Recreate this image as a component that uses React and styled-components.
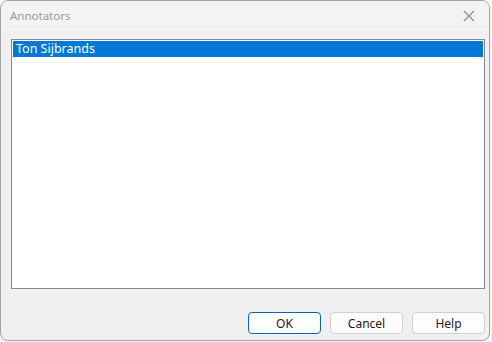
import React, { useState } from "react";
import styled, { createGlobalStyle } from "styled-components";

const Global = createGlobalStyle`
  html, body {
    margin: 0;
    padding: 0;
    background: #f6f6f6;
  }
  body {
    font-family: "Noto Sans", "Open Sans", Arial, sans-serif;
  }
`;

function CloseIcon() {
  return (
    <svg width="12" height="12" viewBox="0 0 12 12">
      <path d="M1 1 L11 11 M11 1 L1 11" stroke="#8a8a8a" strokeWidth="1.1" fill="none" />
    </svg>
  );
}

function App() {
  const annotators = ["Ton Sijbrands"];
  const [selected, setSelected] = useState(0);

  return (
    <>
      <Global />
      <Window>
        <TitleBar>
          <span>Annotators</span>
          <CloseButton aria-label="Close">
            <CloseIcon />
          </CloseButton>
        </TitleBar>
        <Body>
          <ListBox>
            {annotators.map((name, index) => (
              <ListItem
                key={index}
                $selected={index === selected}
                onClick={() => setSelected(index)}
              >
                {name}
              </ListItem>
            ))}
          </ListBox>
        </Body>
        <Footer>
          <Button $default>OK</Button>
          <Button>Cancel</Button>
          <Button>Help</Button>
        </Footer>
      </Window>
    </>
  );
}

const Window = styled.div`
  width: 490px;
  height: 341px;
  box-sizing: border-box;
  border: 1px solid #a4a4a4;
  border-radius: 8px;
  background: #f0f0f0;
  display: flex;
  flex-direction: column;
  overflow: hidden;
`;

const TitleBar = styled.div`
  height: 30px;
  display: flex;
  align-items: center;
  justify-content: space-between;
  padding: 0 0 0 9px;
  background: #f3f3f3;
  color: #999999;
  font-size: 11.5px;
  span {
    margin-top: -1px;
  }
`;

const CloseButton = styled.div`
  width: 36px;
  height: 30px;
  display: flex;
  align-items: center;
  justify-content: center;
  margin-right: 2px;
  margin-top: -1px;
`;

const Body = styled.div`
  padding: 8px 4px 0 10px;
`;

const ListBox = styled.div`
  height: 250px;
  box-sizing: border-box;
  border: 1px solid #82878f;
  background: #ffffff;
  padding: 1px;
`;

const ListItem = styled.div`
  height: 16px;
  line-height: 16px;
  padding-left: 3px;
  font-size: 12.5px;
  color: ${(p) => (p.$selected ? "#ffffff" : "#000000")};
  background: ${(p) => (p.$selected ? "#0078d7" : "transparent")};
  cursor: default;
`;

const Footer = styled.div`
  display: flex;
  justify-content: flex-end;
  gap: 9px;
  padding: 23px 4px 0 0;
`;

const Button = styled.button`
  width: 73px;
  height: 22px;
  box-sizing: border-box;
  border-radius: 4px;
  background: #fdfdfd;
  border: ${(p) => (p.$default ? "1.5px solid #0067c0" : "1px solid #d0d0d0")};
  font-family: "Noto Sans", "Open Sans", Arial, sans-serif;
  font-size: 12px;
  color: #1a1a1a;
  padding: 0;
  display: flex;
  align-items: center;
  justify-content: center;
`;

export default App;
